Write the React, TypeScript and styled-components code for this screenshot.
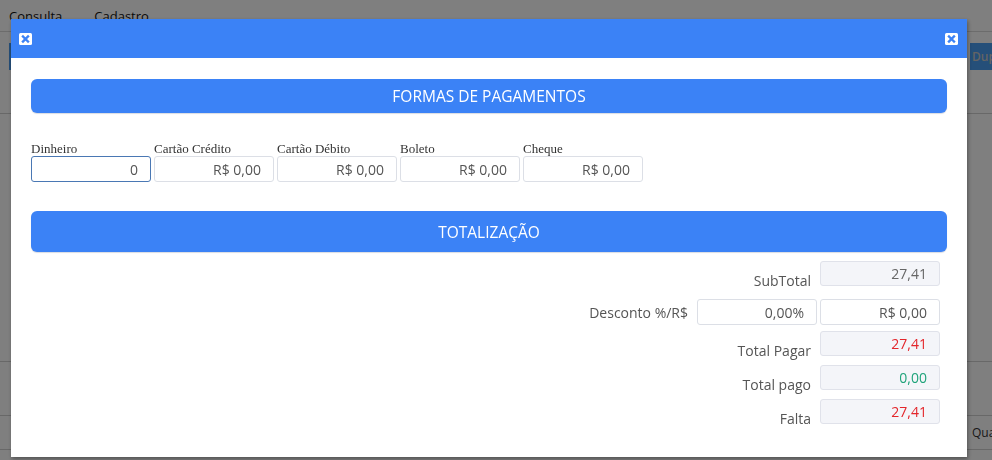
import * as React from 'react';
import styled, { createGlobalStyle } from 'styled-components';

const GlobalStyle = createGlobalStyle`
  html, body {
    margin: 0;
    padding: 0;
    background: #fff;
    overflow: hidden;
  }
  body {
    font-family: "Open Sans", "Noto Sans", sans-serif;
  }
`;

// page behind the dialog
const Page = styled.div`
  width: 1100px;
  height: 460px;
  color: #111;
`;

const Tabs = styled.div`
  display: flex;
  gap: 32px;
  height: 31px;
  padding-left: 9px;
  border-bottom: 1px solid #d8d8d8;
`;

const Tab = styled.div`
  font-size: 13px;
  line-height: 32px;
`;

const Toolbar = styled.div`
  display: flex;
  margin-top: 11px;
  padding-left: 9px;
`;

const ToolbarLeft = styled.div`
  width: 961px;
`;

const ToolButton = styled.div`
  display: inline-flex;
  align-items: center;
  height: 27px;
  padding: 0 12px 0 2px;
  background: #4a9ef2;
  color: #c8c8c8;
  font-size: 12px;
  font-weight: 600;
`;

const TableArea = styled.div`
  margin-top: 43px;
  border-top: 1px solid #d0d0d0;
  height: 247px;
`;

const TableRow = styled.div`
  height: 53px;
  border-top: 1px solid #d0d0d0;
`;

const QtyRow = styled.div`
  height: 33px;
  border-top: 1px solid #d0d0d0;
  border-bottom: 1px solid #d0d0d0;
  padding-left: 972px;
`;

const TableCell = styled.div`
  font-size: 12px;
  color: #333;
  line-height: 33px;
`;

// modal
const Overlay = styled.div`
  position: fixed;
  inset: 0;
  background: rgba(0, 0, 0, 0.5);
  padding: 19px 0 0 11px;
`;

const Modal = styled.div`
  width: 956px;
  height: 438px;
  background: #fff;
  box-shadow: 1px 2px 4px rgba(0, 0, 0, 0.35);
  display: flex;
  flex-direction: column;
`;

const ModalHeader = styled.div`
  height: 39px;
  box-sizing: border-box;
  background: #3b82f6;
  display: flex;
  justify-content: space-between;
  align-items: flex-start;
  padding: 14px 9px 0 8px;
`;

const CloseButton = styled.button`
  width: 13px;
  height: 12px;
  padding: 0;
  border: 0;
  background: none;
  display: block;
  cursor: pointer;
`;

const ModalBody = styled.div`
  padding: 21px 20px 0 20px;
`;

const SectionBar = styled.div<{ $h: number }>`
  height: ${(p) => p.$h}px;
  border-radius: 6px;
  background: #3b82f6;
  color: #fff;
  font-size: 15.5px;
  display: flex;
  align-items: center;
  justify-content: center;
  box-shadow: 0 1px 1px #d9dce3;
`;

const Payments = styled.div`
  display: flex;
  gap: 3px;
  margin: 28px 0 29px;
`;

const Field = styled.div`
  display: flex;
  flex-direction: column;
`;

const FieldLabel = styled.label`
  font-family: "Liberation Serif", "DejaVu Serif", serif;
  font-size: 13px;
  line-height: 15px;
  color: #333;
`;

const Input = styled.input<{ $active?: boolean; $readonly?: boolean; $color?: string }>`
  width: 120px;
  height: ${(p) => (p.$readonly ? 25 : 26)}px;
  box-sizing: border-box;
  border: 1px solid ${(p) => (p.$active ? '#4a78b4' : p.$readonly ? '#e0e2ea' : '#dcdfe6')};
  border-radius: 3px;
  background: ${(p) => (p.$readonly ? '#f4f5f9' : '#fff')};
  padding: 0 12px;
  text-align: right;
  font-family: "Open Sans", "Noto Sans", sans-serif;
  font-size: 14px;
  color: ${(p) => p.$color || '#555'};
  outline: none;
`;

const Totals = styled.div`
  display: flex;
  flex-direction: column;
  align-items: flex-end;
  padding: 9px 7px 0 0;
`;

const TotalRow = styled.div<{ $h: number }>`
  height: ${(p) => p.$h}px;
  display: flex;
  align-items: flex-start;
  gap: 3px;
`;

const TotalLabel = styled.span<{ $top: number }>`
  padding-top: ${(p) => p.$top}px;
  margin-right: 6px;
  font-size: 14px;
  line-height: 20px;
  color: #555;
`;

const CloseIcon = () => (
  <svg width="13" height="12" viewBox="0 0 13 12">
    <rect x="0" y="0" width="13" height="12" rx="1.5" fill="#fff" />
    <path d="M4 3.5 L9 8.5 M9 3.5 L4 8.5" stroke="#3b82f6" strokeWidth="2.4" strokeLinecap="square" />
  </svg>
);

const payments = [
  { label: 'Dinheiro', value: '0', active: true },
  { label: 'Cartão Crédito', value: 'R$ 0,00' },
  { label: 'Cartão Débito', value: 'R$ 0,00' },
  { label: 'Boleto', value: 'R$ 0,00' },
  { label: 'Cheque', value: 'R$ 0,00' },
];

const totals = [
  { label: 'SubTotal', value: '27,41', color: '#666', h: 38 },
  { label: 'Total Pagar', value: '27,41', color: '#e3262b', h: 34 },
  { label: 'Total pago', value: '0,00', color: '#1fa37a', h: 34 },
  { label: 'Falta', value: '27,41', color: '#e3262b', h: 34 },
];

export default function App() {
  const [sub, ...rest] = totals;

  return (
    <>
      <GlobalStyle />
      <Page>
        <Tabs>
          <Tab>Consulta</Tab>
          <Tab>Cadastro</Tab>
        </Tabs>
        <Toolbar>
          <ToolbarLeft>
            <ToolButton>Novo</ToolButton>
          </ToolbarLeft>
          <ToolButton>Dupl</ToolButton>
        </Toolbar>
        <TableArea />
        <TableRow />
        <QtyRow>
          <TableCell>Quar</TableCell>
        </QtyRow>
      </Page>

      <Overlay>
        <Modal>
          <ModalHeader>
            <CloseButton aria-label="Fechar">
              <CloseIcon />
            </CloseButton>
            <CloseButton aria-label="Fechar">
              <CloseIcon />
            </CloseButton>
          </ModalHeader>
          <ModalBody>
            <SectionBar $h={34}>FORMAS DE PAGAMENTOS</SectionBar>
            <Payments>
              {payments.map((p) => (
                <Field key={p.label}>
                  <FieldLabel>{p.label}</FieldLabel>
                  <Input $active={p.active} defaultValue={p.value} />
                </Field>
              ))}
            </Payments>

            <SectionBar $h={41}>TOTALIZAÇÃO</SectionBar>
            <Totals>
              <TotalRow $h={sub.h}>
                <TotalLabel $top={10}>{sub.label}</TotalLabel>
                <Input $readonly readOnly value={sub.value} $color={sub.color} />
              </TotalRow>
              <TotalRow $h={32}>
                <TotalLabel $top={4}>Desconto %/R$</TotalLabel>
                <Input defaultValue="0,00%" />
                <Input defaultValue="R$ 0,00" />
              </TotalRow>
              {rest.map((t) => (
                <TotalRow key={t.label} $h={t.h}>
                  <TotalLabel $top={10}>{t.label}</TotalLabel>
                  <Input $readonly readOnly value={t.value} $color={t.color} />
                </TotalRow>
              ))}
            </Totals>
          </ModalBody>
        </Modal>
      </Overlay>
    </>
  );
}
